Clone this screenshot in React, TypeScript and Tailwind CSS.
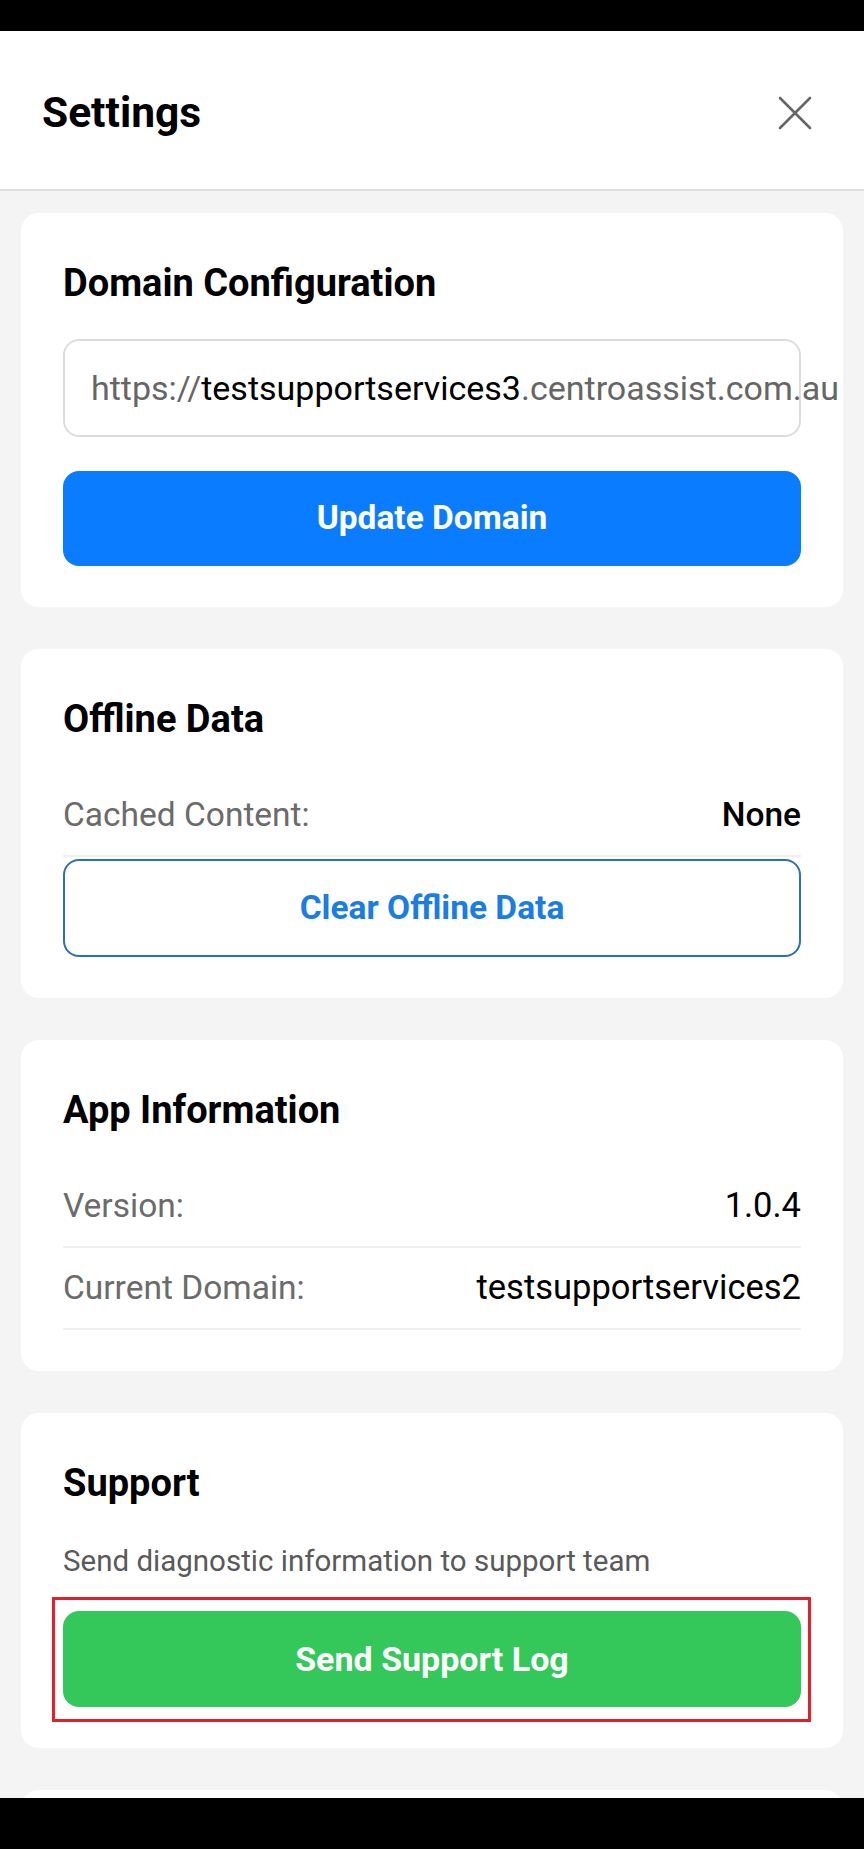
function Card({ title, children }: { title: string; children: React.ReactNode }) {
  return (
    <section className="bg-white rounded-[18px] px-[42px] pt-[50px] pb-[41px] shrink-0">
      <h2 className="text-[38px] leading-[40px] font-bold text-black mb-[36px]">{title}</h2>
      {children}
    </section>
  );
}

function Row({ label, value, strong }: { label: string; value: string; strong?: boolean }) {
  return (
    <div className="flex items-center justify-between h-[82px] border-b-2 border-[#efefef]">
      <span className="text-[33.5px] text-[#6b6b6b]">{label}</span>
      <span className={strong ? "text-[33.5px] font-medium text-black" : "text-[34.5px] text-black"}>{value}</span>
    </div>
  );
}

export default function App() {
  return (
    <div className="relative w-[864px] h-[1849px] bg-[#f4f4f4] flex flex-col overflow-hidden font-['Roboto',sans-serif]">
      <div className="h-[31px] bg-black shrink-0" />
      <header className="h-[160px] shrink-0 bg-white border-b-2 border-[#dedede] flex items-center justify-between pl-[42px] pr-[52px] pt-[5px]">
        <h1 className="text-[42.5px] font-bold text-black">Settings</h1>
        <svg width="34" height="34" viewBox="0 0 34 34" className="text-[#666]">
          <path d="M2 2L32 32M32 2L2 32" stroke="currentColor" strokeWidth="2.6" strokeLinecap="round" />
        </svg>
      </header>

      <main className="flex-1 flex flex-col gap-[42px] px-[21px] pt-[22px] overflow-hidden">
        <Card title="Domain Configuration">
          <div className="h-[98px] border-2 border-[#dddddd] rounded-[16px] flex items-center pl-[26px] whitespace-nowrap overflow-visible text-[34px] text-[#666]">
            https://<span className="text-black">testsupportservices3</span>.centroassist.com.au
          </div>
          <button className="mt-[34px] w-full h-[95px] rounded-[16px] bg-[#0a7cff] text-white text-[33.5px] font-bold">
            Update Domain
          </button>
        </Card>

        <Card title="Offline Data">
          <Row label="Cached Content:" value="None" strong />
          <button className="mt-[2px] w-full h-[98px] rounded-[16px] border-2 border-[#2e70b6] bg-white text-[#1b7de2] text-[33.5px] font-bold">
            Clear Offline Data
          </button>
        </Card>

        <Card title="App Information">
          <Row label="Version:" value="1.0.4" />
          <Row label="Current Domain:" value="testsupportservices2" />
        </Card>

        <Card title="Support">
          <p className="text-[29.5px] leading-[44px] text-[#5a5a5a] mb-[28px]">Send diagnostic information to support team</p>
          <div className="relative">
            <span className="absolute -left-[11px] -right-[10px] -top-[14px] -bottom-[15px] border-[3px] border-[#e3202a]" />
            <button className="relative w-full h-[96px] rounded-[16px] bg-[#34c759] text-white text-[34px] font-bold">
              Send Support Log
            </button>
          </div>
        </Card>

        <section className="bg-white rounded-[18px] h-[100px] shrink-0" />
      </main>

      <div className="absolute left-0 top-[1798px] w-[864px] h-[51px] bg-black" />
    </div>
  );
}
